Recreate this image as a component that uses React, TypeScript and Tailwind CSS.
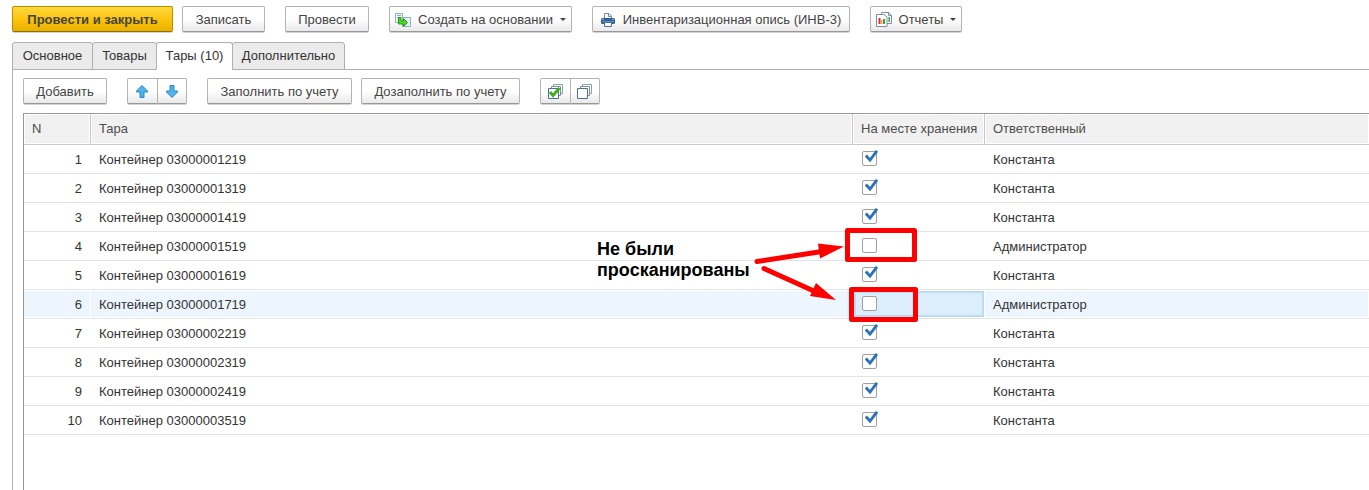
import { useState } from "react";
import type { ReactNode } from "react";

function CreateFromIcon() {
  return (
    <svg className="shrink-0" width="16" height="16" viewBox="0 0 16 16" aria-hidden="true">
      <path d="M.5 1.5h7v9h-7z" fill="#f2f7fb" stroke="#8fb0cc" />
      <path d="M2 3.500h4M2 5.500h4" stroke="#8aa9c4" fill="none" />
      <path d="M7.500 5.500h8v9h-8z" fill="#e9f2f9" stroke="#8fb0c9" />
      <path d="M3.500 5.500H6v3.500h2.500V6.500l4 4-4 4V12h-5z" fill="#49dc22" stroke="#259a14" />
    </svg>
  );
}

function PrinterIcon() {
  return (
    <svg className="shrink-0" width="14" height="14" viewBox="0 0 14 14" aria-hidden="true">
      <path d="M3.500 6V.5h4.500l2.500 2.500V6" fill="#fff" stroke="#6a8fb3" />
      <path d="M7.500.5v3h3" fill="none" stroke="#6a8fb3" />
      <rect x="0" y="5" width="14" height="6" rx="1.500" fill="#2f6396" />
      <path d="M1 6.500h2M11 6.500h2" stroke="#86abd0" />
      <path d="M1 8.500h12" stroke="#5f8fbd" />
      <path d="M3.500 9.500h7v4h-7z" fill="#fff" stroke="#4d7297" />
    </svg>
  );
}

function ReportsIcon() {
  return (
    <svg className="shrink-0" width="16" height="15" viewBox="0 0 16 15" aria-hidden="true">
      <path d="M5.500.5h7l3 3v8h-10z" fill="#fff" stroke="#7b91a6" />
      <path d="M12.500.5v3h3" fill="none" stroke="#7b91a6" />
      <path d="M13.200 5v5" stroke="#42a83a" strokeWidth="1.500" />
      <path d="M.5 2.500h7.500l3 2.500v9.500H.5z" fill="#fff" stroke="#7b91a6" />
      <path d="M3.500 6v6" stroke="#e0342b" strokeWidth="2" />
      <path d="M5.700 8v4" stroke="#f0883a" strokeWidth="1.200" />
      <path d="M8 7v5" stroke="#35a52e" strokeWidth="2" />
    </svg>
  );
}

function ArrowIcon({ down = false }: { down?: boolean }) {
  return (
    <svg width="13" height="13" viewBox="0 0 13 13" aria-hidden="true">
      <path
        d={down ? "M4 .5h4v5.500h3.500v1L6 12.500.5 7V6H4z" : "M4 12.500h4V7h3.500V6L6 .5.5 6v1H4z"}
        fill="#4db4f0"
        stroke="#2f86bd"
      />
    </svg>
  );
}

function StackIcon({ checked = false }: { checked?: boolean }) {
  return (
    <svg width="16" height="15" viewBox="0 0 16 15" aria-hidden="true">
      <path d="M5.500.5h9v9h-9z" fill="#fff" stroke="#8a9fb3" />
      <path d="M3.500 2.500h9v9h-9z" fill="#fff" stroke="#7890a8" />
      <path d="M.5 4.500h10v10H.5z" fill="#fff" stroke="#4f6f8f" />
      {checked && <path d="M2 8 5 11.500 11.500 4" fill="none" stroke="#3fae1f" strokeWidth="3" />}
    </svg>
  );
}

function Caret() {
  return (
    <svg className="shrink-0" width="6" height="3" viewBox="0 0 6 3" aria-hidden="true">
      <path d="M0 0h6L3 3z" fill="#444" />
    </svg>
  );
}

const buttonLook =
  "flex h-[26px] items-center justify-center border border-[#b3b3b3] border-b-[#989898] bg-linear-to-b from-white from-50% to-[#e9e9e9] text-[#444] shadow-[0_1px_0_#d4d4d4] whitespace-nowrap";

function Button({ className, children }: { className: string; children: ReactNode }) {
  return (
    <button type="button" className={`${buttonLook} rounded-[2px] pt-px ${className}`}>
      {children}
    </button>
  );
}

function ButtonPair({ labels, children }: { labels: [string, string]; children: [ReactNode, ReactNode] }) {
  return (
    <div className="flex">
      <button type="button" aria-label={labels[0]} className={`${buttonLook} w-[31px] rounded-l-[2px]`}>
        {children[0]}
      </button>
      <button type="button" aria-label={labels[1]} className={`${buttonLook} w-[29px] rounded-r-[2px] border-l-0`}>
        {children[1]}
      </button>
    </div>
  );
}

const tabs = [
  { title: "Основное", width: "w-[81px]" },
  { title: "Товары", width: "w-[65px]" },
  { title: "Тары (10)", width: "w-[77px]" },
  { title: "Дополнительно", width: "w-[113px]" },
];

const initialRows = [
  { code: "03000001219", stored: true, person: "Константа" },
  { code: "03000001319", stored: true, person: "Константа" },
  { code: "03000001419", stored: true, person: "Константа" },
  { code: "03000001519", stored: false, person: "Администратор" },
  { code: "03000001619", stored: true, person: "Константа" },
  { code: "03000001719", stored: false, person: "Администратор" },
  { code: "03000002219", stored: true, person: "Константа" },
  { code: "03000002319", stored: true, person: "Константа" },
  { code: "03000002419", stored: true, person: "Константа" },
  { code: "03000003519", stored: true, person: "Константа" },
];

function StoredCheckbox({ label, checked, onChange }: { label: string; checked: boolean; onChange: () => void }) {
  return (
    <label className="relative block size-[15px]">
      <input
        type="checkbox"
        aria-label={label}
        checked={checked}
        onChange={onChange}
        className="block size-[15px] appearance-none rounded-[2px] border border-[#a0a0a0] bg-white"
      />
      {checked && (
        <svg className="pointer-events-none absolute -top-px left-[3px]" width="14" height="13" viewBox="0 0 14 13" aria-hidden="true">
          <path d="M.8 5.500 5 10 12 .8" fill="none" stroke="#2a72b9" strokeWidth="2.800" />
        </svg>
      )}
    </label>
  );
}

function Annotations() {
  return (
    <div className="pointer-events-none absolute inset-0">
      <p className="absolute top-[239px] left-[597px] text-[18px] leading-[21px] font-bold text-black">
        Не были
        <br />
        просканированы
      </p>
      <svg className="absolute top-[220px] left-[750px]" width="180" height="110" viewBox="0 0 180 110" aria-hidden="true">
        <g fill="none" stroke="#fe0000" strokeWidth="5" strokeLinejoin="round">
          <rect x="97.500" y="10.500" width="67" height="29" />
          <rect x="101.500" y="69.500" width="64" height="30" />
        </g>
        <g stroke="#fe0000" strokeWidth="5" strokeLinecap="round">
          <path d="M7 41.500 72 31.500" />
          <path d="M14 48.500 66 72" />
        </g>
        <g fill="#fe0000">
          <path d="M68 23.500 94 26.500 70 38.500z" />
          <path d="M66 63 86 80 60 76z" />
        </g>
      </svg>
    </div>
  );
}

export default function App() {
  const [active, setActive] = useState(2);
  const [rows, setRows] = useState(initialRows);

  const toggle = (index: number) =>
    setRows(rows.map((row, i) => (i === index ? { ...row, stored: !row.stored } : row)));

  return (
    <main className="relative flex min-h-screen flex-col overflow-hidden bg-white pt-[6px] pl-3 font-['Liberation_Sans',Arial,sans-serif] text-[13px] leading-4 text-[#333]">
      <div className="flex">
        <button
          type="button"
          className="h-[26px] w-[161px] rounded-[2px] border border-[#b88f00] border-b-[#8f7000] bg-linear-to-b from-[#ffd83a] via-[#fcc40a] to-[#e9b000] pt-px font-bold text-[#444] shadow-[0_1px_0_#d4d4d4]"
        >
          Провести и закрыть
        </button>
        <Button className="ml-[9px] w-[83px]">Записать</Button>
        <Button className="ml-5 w-[84px]">Провести</Button>
        <Button className="ml-5 w-[183px] gap-[7px]">
          <CreateFromIcon />
          Создать на основании
          <Caret />
        </Button>
        <Button className="ml-5 w-[258px] gap-2">
          <PrinterIcon />
          Инвентаризационная опись (ИНВ-3)
        </Button>
        <Button className="ml-5 w-[92px] gap-[7px]">
          <ReportsIcon />
          Отчеты
          <Caret />
        </Button>
      </div>

      <div role="tablist" className="relative z-10 mt-[10px] flex">
        {tabs.map((tab, i) => (
          <button
            key={tab.title}
            type="button"
            role="tab"
            aria-selected={i === active}
            onClick={() => setActive(i)}
            className={`-mr-px h-7 rounded-t-[3px] border border-[#b0b0b0] whitespace-nowrap ${tab.width} ${
              i === active ? "border-b-white bg-white" : "bg-[#ebebeb]"
            }`}
          >
            {tab.title}
          </button>
        ))}
      </div>

      <section className="-mt-px flex grow flex-col border-t border-l border-[#b0b0b0] pt-2 pl-[10px]">
        <div className="flex">
          <Button className="w-[84px]">Добавить</Button>
          <div className="ml-5">
            <ButtonPair labels={["Переместить вверх", "Переместить вниз"]}>
              <ArrowIcon />
              <ArrowIcon down />
            </ButtonPair>
          </div>
          <Button className="ml-5 w-[145px]">Заполнить по учету</Button>
          <Button className="ml-[9px] w-[159px]">Дозаполнить по учету</Button>
          <div className="ml-5">
            <ButtonPair labels={["Установить флажки", "Снять флажки"]}>
              <StackIcon checked />
              <StackIcon />
            </ButtonPair>
          </div>
        </div>

        <div className="mt-[9px] grow border-t border-l border-[#989898]">
          <table className="w-full table-fixed border-separate border-spacing-0 text-left">
            <colgroup>
              <col className="w-[67px]" />
              <col className="w-[762px]" />
              <col className="w-[132px]" />
              <col />
            </colgroup>
            <thead>
              <tr className="h-[31px] text-[#4d4d4d]">
                {["N", "Тара", "На месте хранения", "Ответственный"].map((title) => (
                  <th
                    key={title}
                    scope="col"
                    className="border-r border-b border-[#c8c8c8] bg-[#f1f1f1] px-2 font-normal whitespace-nowrap shadow-[inset_0_0_0_1px_#fff] last:border-r-0"
                  >
                    {title}
                  </th>
                ))}
              </tr>
            </thead>
            <tbody>
              {rows.map((row, i) => {
                const current = i === 5;
                const cell = `border-b border-[#e4e4e4] ${current ? "bg-[#edf6fe] shadow-[inset_0_1px_0_#fff,inset_-1px_-1px_0_#fff]" : ""}`;
                return (
                  <tr key={row.code} className="h-[29px]">
                    <td className={`${cell} pt-0.5 pr-[9px] text-right`}>{i + 1}</td>
                    <td className={`${cell} px-2 pt-0.5`}>Контейнер {row.code}</td>
                    <td
                      className={
                        current
                          ? "border-b border-[#e4e4e4] bg-[#dceefc] pb-px pl-[9px] shadow-[inset_0_1px_0_#fff,inset_-1px_-1px_0_#fff,inset_0_0_0_3px_#b9dcf8]"
                          : `${cell} pb-px pl-[9px]`
                      }
                    >
                      <StoredCheckbox
                        label={`На месте хранения: ${row.code}`}
                        checked={row.stored}
                        onChange={() => toggle(i)}
                      />
                    </td>
                    <td className={`${cell} px-2 pt-0.5`}>{row.person}</td>
                  </tr>
                );
              })}
            </tbody>
          </table>
        </div>
      </section>
      <Annotations />
    </main>
  );
}
